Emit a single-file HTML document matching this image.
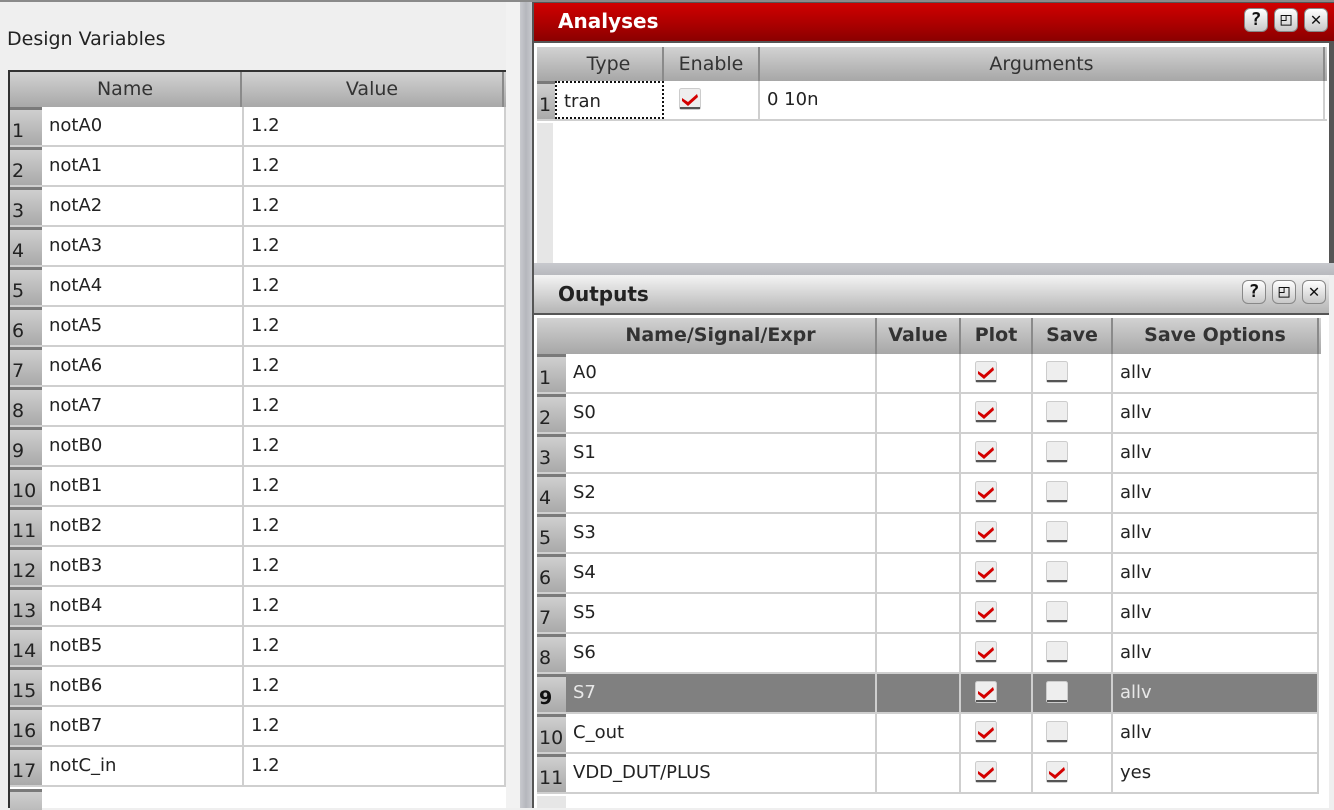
<!DOCTYPE html>
<html><head><meta charset="utf-8"><style>
*{box-sizing:border-box;margin:0;padding:0}
body{width:1334px;height:808px;overflow:hidden;background:#efefef;font-family:"DejaVu Sans","Liberation Sans",sans-serif;color:#222;position:relative}
.abs{position:absolute}
.tbl{position:absolute;background:#fff;border-left:2px solid #333;border-top:2px solid #333}
.row{position:absolute;left:0;display:flex;height:40px;border-bottom:2px solid #cfcfcf;background:#fff}
.row>div{height:100%;border-right:2px solid #cfcfcf;font-size:18px;line-height:38px;padding-left:7px;white-space:nowrap;overflow:hidden}
.row>div.n{background:linear-gradient(#cfcfcf,#a9a9a9);border-right:none;border-top:3px solid #7a7a7a;padding-left:2px;line-height:42px;font-size:19px;color:#222}
.hdr{position:absolute;left:0;display:flex;background:linear-gradient(#d2d2d2,#a7a7a7)}
.hdr>div{height:100%;border-right:2px solid #8a8a8a;text-align:center;font-size:19px;line-height:34px;color:#333}
.hdr.b>div{font-weight:bold}
.cb{display:inline-block;width:22px;height:22px;vertical-align:middle;margin-top:-3px}
.sel{background:#808080!important}
.sel>div{color:#e8e8e8}
.btn{position:absolute;width:24px;height:24px;border-radius:6px;background:linear-gradient(#fff,#c8c8c8);border:1px solid #888;font-weight:bold;font-size:18px;line-height:22px;text-align:center;color:#111;font-family:"DejaVu Sans Mono",monospace}
</style></head><body>
<div class="abs" style="left:0;top:0;width:1334px;height:2px;background:#8a8a8a"></div>
<div class="abs" style="left:7px;top:28px;font-size:19px;color:#222">Design Variables</div>
<div class="abs" style="left:506px;top:2px;width:14px;height:806px;background:#f2f2f2"></div>
<div class="abs" style="left:520px;top:2px;width:12px;height:806px;background:linear-gradient(90deg,#c8c9ce,#b5b7bd,#c8c9ce)"></div>

<svg width="0" height="0" style="position:absolute"><defs>
<g id="on"><rect x="0.5" y="0.5" width="21" height="21" rx="2" fill="#eee" stroke="#ccc"/><rect x="1" y="19" width="20" height="2" fill="#555"/><path d="M3 10 L9 14 L18 6 L19 9 L9 18 L3 13 Z" fill="#d40000"/></g>
<g id="off"><rect x="0.5" y="0.5" width="21" height="21" rx="2" fill="#eee" stroke="#ccc"/><rect x="1" y="19" width="20" height="2" fill="#555"/></g>
</defs></svg>

<!-- Left table -->
<div class="tbl" style="left:8px;top:70px;width:498px;height:738px">
<div class="hdr" style="top:0;height:36px;width:496px"><div style="width:232px;border-right:2px solid #8a8a8a">Name</div><div style="width:262px">Value</div></div>
<div class="row" style="top:35px"><div class="n" style="width:32px">1</div><div style="width:202px">notA0</div><div style="width:262px">1.2</div></div>
<div class="row" style="top:75px"><div class="n" style="width:32px">2</div><div style="width:202px">notA1</div><div style="width:262px">1.2</div></div>
<div class="row" style="top:115px"><div class="n" style="width:32px">3</div><div style="width:202px">notA2</div><div style="width:262px">1.2</div></div>
<div class="row" style="top:155px"><div class="n" style="width:32px">4</div><div style="width:202px">notA3</div><div style="width:262px">1.2</div></div>
<div class="row" style="top:195px"><div class="n" style="width:32px">5</div><div style="width:202px">notA4</div><div style="width:262px">1.2</div></div>
<div class="row" style="top:235px"><div class="n" style="width:32px">6</div><div style="width:202px">notA5</div><div style="width:262px">1.2</div></div>
<div class="row" style="top:275px"><div class="n" style="width:32px">7</div><div style="width:202px">notA6</div><div style="width:262px">1.2</div></div>
<div class="row" style="top:315px"><div class="n" style="width:32px">8</div><div style="width:202px">notA7</div><div style="width:262px">1.2</div></div>
<div class="row" style="top:355px"><div class="n" style="width:32px">9</div><div style="width:202px">notB0</div><div style="width:262px">1.2</div></div>
<div class="row" style="top:395px"><div class="n" style="width:32px">10</div><div style="width:202px">notB1</div><div style="width:262px">1.2</div></div>
<div class="row" style="top:435px"><div class="n" style="width:32px">11</div><div style="width:202px">notB2</div><div style="width:262px">1.2</div></div>
<div class="row" style="top:475px"><div class="n" style="width:32px">12</div><div style="width:202px">notB3</div><div style="width:262px">1.2</div></div>
<div class="row" style="top:515px"><div class="n" style="width:32px">13</div><div style="width:202px">notB4</div><div style="width:262px">1.2</div></div>
<div class="row" style="top:555px"><div class="n" style="width:32px">14</div><div style="width:202px">notB5</div><div style="width:262px">1.2</div></div>
<div class="row" style="top:595px"><div class="n" style="width:32px">15</div><div style="width:202px">notB6</div><div style="width:262px">1.2</div></div>
<div class="row" style="top:635px"><div class="n" style="width:32px">16</div><div style="width:202px">notB7</div><div style="width:262px">1.2</div></div>
<div class="row" style="top:675px"><div class="n" style="width:32px">17</div><div style="width:202px">notC_in</div><div style="width:262px">1.2</div></div>
<div class="abs" style="left:0;top:717px;width:32px;height:21px;background:linear-gradient(#cfcfcf,#bbb);border-top:3px solid #7a7a7a"></div>
</div>

<!-- Analyses -->
<div class="abs" style="left:532px;top:2px;width:802px;height:806px;background:#555"></div>
<div class="abs" style="left:534px;top:3px;width:800px;height:38px;background:linear-gradient(#d00000,#a80000 60%,#8a0000)"></div>
<div class="abs" style="left:558px;top:9px;font-size:20px;font-weight:bold;color:#fff">Analyses</div>
<div class="btn" style="left:1244px;top:8px">?</div>
<div class="btn" style="left:1274px;top:8px">◰</div>
<div class="btn" style="left:1304px;top:8px">✕</div>
<div class="tbl" style="left:534px;top:43px;width:795px;height:220px;border-left:none;border-top:none">
<div class="hdr" style="top:4px;height:34px;width:790px;left:3px"><div style="width:18px;border:none"></div><div style="width:109px">Type</div><div style="width:96px">Enable</div><div style="width:565px;">Arguments</div></div>
<div class="row" style="top:38px;left:3px;width:790px"><div class="n" style="width:18px">1</div><div style="width:109px;border:2px dotted #111">tran</div><div style="width:96px;padding-left:15px"><svg class="cb" viewBox="0 0 22 22"><use href="#on"/></svg></div><div style="width:565px">0 10n</div></div>
<div class="abs" style="left:3px;top:80px;width:16px;height:140px;background:#e6e6e6"></div>
</div>
<div class="abs" style="left:534px;top:263px;width:800px;height:12px;background:linear-gradient(#c8c9ce,#b8b9be)"></div>

<!-- Outputs -->
<div class="abs" style="left:534px;top:275px;width:795px;height:38px;background:linear-gradient(#f4f4f4,#b5b5b5)"></div>
<div class="abs" style="left:558px;top:282px;font-size:20px;font-weight:bold;color:#222">Outputs</div>
<div class="btn" style="left:1242px;top:280px">?</div>
<div class="btn" style="left:1272px;top:280px">◰</div>
<div class="btn" style="left:1302px;top:280px">✕</div>
<div class="abs" style="left:1329px;top:275px;width:5px;height:533px;background:#efefef"></div>
<div class="tbl" style="left:534px;top:315px;width:795px;height:493px;border-left:none;border-top:none">
<div class="hdr b" style="top:3px;height:36px;width:784px;left:3px"><div style="width:29px;border:none"></div><div style="width:311px">Name/Signal/Expr</div><div style="width:84px">Value</div><div style="width:72px">Plot</div><div style="width:80px">Save</div><div style="width:206px">Save Options</div></div>
<div class="row" style="top:39px;left:3px;width:782px"><div class="n" style="width:29px">1</div><div style="width:311px">A0</div><div style="width:84px"></div><div style="width:72px;padding-left:14px"><svg class="cb" viewBox="0 0 22 22"><use href="#on"/></svg></div><div style="width:80px;padding-left:13px"><svg class="cb" viewBox="0 0 22 22"><use href="#off"/></svg></div><div style="width:206px">allv</div></div>
<div class="row" style="top:79px;left:3px;width:782px"><div class="n" style="width:29px">2</div><div style="width:311px">S0</div><div style="width:84px"></div><div style="width:72px;padding-left:14px"><svg class="cb" viewBox="0 0 22 22"><use href="#on"/></svg></div><div style="width:80px;padding-left:13px"><svg class="cb" viewBox="0 0 22 22"><use href="#off"/></svg></div><div style="width:206px">allv</div></div>
<div class="row" style="top:119px;left:3px;width:782px"><div class="n" style="width:29px">3</div><div style="width:311px">S1</div><div style="width:84px"></div><div style="width:72px;padding-left:14px"><svg class="cb" viewBox="0 0 22 22"><use href="#on"/></svg></div><div style="width:80px;padding-left:13px"><svg class="cb" viewBox="0 0 22 22"><use href="#off"/></svg></div><div style="width:206px">allv</div></div>
<div class="row" style="top:159px;left:3px;width:782px"><div class="n" style="width:29px">4</div><div style="width:311px">S2</div><div style="width:84px"></div><div style="width:72px;padding-left:14px"><svg class="cb" viewBox="0 0 22 22"><use href="#on"/></svg></div><div style="width:80px;padding-left:13px"><svg class="cb" viewBox="0 0 22 22"><use href="#off"/></svg></div><div style="width:206px">allv</div></div>
<div class="row" style="top:199px;left:3px;width:782px"><div class="n" style="width:29px">5</div><div style="width:311px">S3</div><div style="width:84px"></div><div style="width:72px;padding-left:14px"><svg class="cb" viewBox="0 0 22 22"><use href="#on"/></svg></div><div style="width:80px;padding-left:13px"><svg class="cb" viewBox="0 0 22 22"><use href="#off"/></svg></div><div style="width:206px">allv</div></div>
<div class="row" style="top:239px;left:3px;width:782px"><div class="n" style="width:29px">6</div><div style="width:311px">S4</div><div style="width:84px"></div><div style="width:72px;padding-left:14px"><svg class="cb" viewBox="0 0 22 22"><use href="#on"/></svg></div><div style="width:80px;padding-left:13px"><svg class="cb" viewBox="0 0 22 22"><use href="#off"/></svg></div><div style="width:206px">allv</div></div>
<div class="row" style="top:279px;left:3px;width:782px"><div class="n" style="width:29px">7</div><div style="width:311px">S5</div><div style="width:84px"></div><div style="width:72px;padding-left:14px"><svg class="cb" viewBox="0 0 22 22"><use href="#on"/></svg></div><div style="width:80px;padding-left:13px"><svg class="cb" viewBox="0 0 22 22"><use href="#off"/></svg></div><div style="width:206px">allv</div></div>
<div class="row" style="top:319px;left:3px;width:782px"><div class="n" style="width:29px">8</div><div style="width:311px">S6</div><div style="width:84px"></div><div style="width:72px;padding-left:14px"><svg class="cb" viewBox="0 0 22 22"><use href="#on"/></svg></div><div style="width:80px;padding-left:13px"><svg class="cb" viewBox="0 0 22 22"><use href="#off"/></svg></div><div style="width:206px">allv</div></div>
<div class="row sel" style="top:359px;left:3px;width:782px"><div class="n" style="width:29px;color:#111;font-weight:bold">9</div><div style="width:311px">S7</div><div style="width:84px"></div><div style="width:72px;padding-left:14px"><svg class="cb" viewBox="0 0 22 22"><use href="#on"/></svg></div><div style="width:80px;padding-left:13px"><svg class="cb" viewBox="0 0 22 22"><use href="#off"/></svg></div><div style="width:206px">allv</div></div>
<div class="row" style="top:399px;left:3px;width:782px"><div class="n" style="width:29px">10</div><div style="width:311px">C_out</div><div style="width:84px"></div><div style="width:72px;padding-left:14px"><svg class="cb" viewBox="0 0 22 22"><use href="#on"/></svg></div><div style="width:80px;padding-left:13px"><svg class="cb" viewBox="0 0 22 22"><use href="#off"/></svg></div><div style="width:206px">allv</div></div>
<div class="row" style="top:439px;left:3px;width:782px"><div class="n" style="width:29px">11</div><div style="width:311px">VDD_DUT/PLUS</div><div style="width:84px"></div><div style="width:72px;padding-left:14px"><svg class="cb" viewBox="0 0 22 22"><use href="#on"/></svg></div><div style="width:80px;padding-left:13px"><svg class="cb" viewBox="0 0 22 22"><use href="#on"/></svg></div><div style="width:206px">yes</div></div>
<div class="abs" style="left:3px;top:481px;width:29px;height:12px;background:#e6e6e6"></div>
</div>
</body></html>
